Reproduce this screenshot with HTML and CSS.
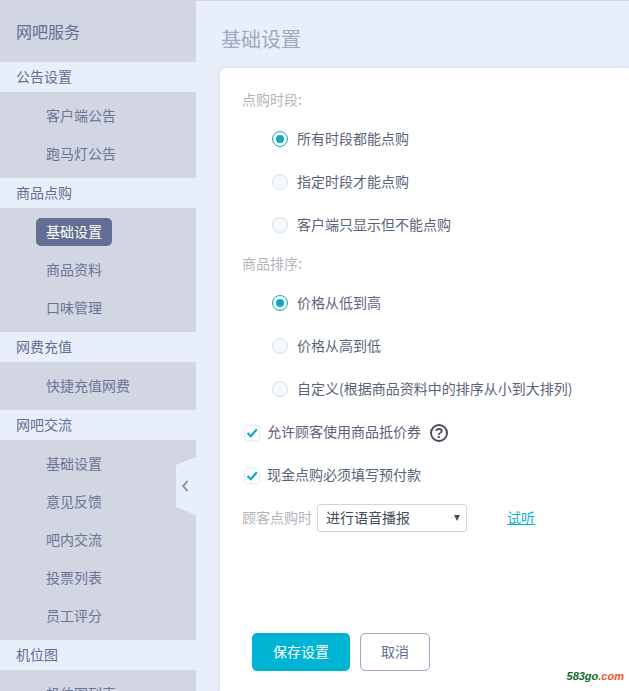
FILE: index.html
```html
<!DOCTYPE html>
<html lang="zh-CN">
<head>
<meta charset="utf-8">
<title>基础设置</title>
<link rel="stylesheet" href="styles.css">
</head>
<body>
<div class="app">
  <aside class="sidebar">
    <div class="brand">网吧服务</div>
    <div class="section">公告设置</div>
    <ul class="items">
      <li><a class="item">客户端公告</a></li>
      <li><a class="item">跑马灯公告</a></li>
    </ul>
    <div class="section">商品点购</div>
    <ul class="items">
      <li><a class="item active">基础设置</a></li>
      <li><a class="item">商品资料</a></li>
      <li><a class="item">口味管理</a></li>
    </ul>
    <div class="section">网费充值</div>
    <ul class="items">
      <li><a class="item">快捷充值网费</a></li>
    </ul>
    <div class="section">网吧交流</div>
    <ul class="items">
      <li><a class="item">基础设置</a></li>
      <li><a class="item">意见反馈</a></li>
      <li><a class="item">吧内交流</a></li>
      <li><a class="item">投票列表</a></li>
      <li><a class="item">员工评分</a></li>
    </ul>
    <div class="section">机位图</div>
    <ul class="items">
      <li><a class="item">机位图列表</a></li>
    </ul>
    <div class="collapse">
      <svg width="8" height="12" viewBox="0 0 8 12"><path d="M6.5 1 L2 6 L6.5 11" fill="none" stroke="#8b9cb3" stroke-width="2"/></svg>
    </div>
  </aside>
  <main class="main">
    <h1 class="title">基础设置</h1>
    <section class="card">
      <div class="label">点购时段:</div>
      <label class="row radio-row"><span class="radio on"></span>所有时段都能点购</label>
      <label class="row radio-row"><span class="radio"></span>指定时段才能点购</label>
      <label class="row radio-row"><span class="radio"></span>客户端只显示但不能点购</label>
      <div class="label">商品排序:</div>
      <label class="row radio-row"><span class="radio on"></span>价格从低到高</label>
      <label class="row radio-row"><span class="radio"></span>价格从高到低</label>
      <label class="row radio-row"><span class="radio"></span>自定义(根据商品资料中的排序从小到大排列)</label>
      <label class="row check-row">
        <span class="check"><svg width="14" height="14" viewBox="0 0 14 14"><path d="M2.5 7 L5.8 10.2 L11.8 3.2" fill="none" stroke="#0fa9c6" stroke-width="2.2"/></svg></span>
        允许顾客使用商品抵价券
        <span class="help">?</span>
      </label>
      <label class="row check-row">
        <span class="check"><svg width="14" height="14" viewBox="0 0 14 14"><path d="M2.5 7 L5.8 10.2 L11.8 3.2" fill="none" stroke="#0fa9c6" stroke-width="2.2"/></svg></span>
        现金点购必须填写预付款
      </label>
      <div class="row voice-row">
        <span class="voice-label">顾客点购时</span>
        <span class="select-box">进行语音播报</span>
        <a class="listen">试听</a>
      </div>
      <div class="actions">
        <button class="btn primary">保存设置</button>
        <button class="btn ghost">取消</button>
      </div>
    </section>
  </main>
</div>
<div class="watermark">583go<span class="wm-dot">.com</span></div>
</body>
</html>
```

FILE: styles.css
```css
* { box-sizing: border-box; }
html, body { margin: 0; padding: 0; height: 100%; overflow: hidden; }
body {
  font-family: "Noto Sans CJK SC", "Noto Sans", sans-serif;
  font-size: 14px;
  color: #5d6680;
  background: #e8eefa;
  border-top: 1px solid #d2d6e2;
}
ul { list-style: none; margin: 0; padding: 0; }
.app { display: flex; height: 690px; }
.sidebar { position: relative; width: 196px; flex: none; background: #d2d6e2; overflow: hidden; }
.brand { height: 61px; line-height: 61px; padding-left: 16px; font-size: 16px; color: #626f92; }
.section { height: 30px; line-height: 28px; padding-left: 16px; background: #e8eefa; color: #626f92; }
.items { padding: 5px 0; }
.items li { height: 38px; display: flex; align-items: center; padding-left: 36px; }
.item { display: block; height: 28px; line-height: 26px; padding: 0 10px; border-radius: 5px; color: #6a7594; }
.item.active { background: #636f92; color: #fff; }
.collapse {
  position: absolute; left: 176px; top: 456px; width: 20px; height: 58px;
  background: #e8eefa;
  clip-path: polygon(0 8px, 20px 0, 20px 58px, 0 50px);
  display: flex; align-items: center; padding-left: 5px;
}
.main { flex: 1; min-width: 0; padding-left: 24px; display: flex; flex-direction: column; }
.title { margin: 0 0 0 1px; height: 67px; line-height: 76px; font-size: 20px; font-weight: 400; color: #a1aabb; }
.card {
  flex: 1; background: #fff; border-radius: 6px 0 0 0;
  box-shadow: 0 0 4px #ccd6ea;
  padding: 14px 0 0 22px;
}
.label { height: 35px; line-height: 35px; color: #b0b4bb; }
.row { display: flex; align-items: center; height: 43px; padding-bottom: 2px; color: #5a6478; }
.radio-row { padding-left: 30px; }
.radio {
  width: 16px; height: 16px; border-radius: 50%; margin: 2px 9px 0 0;
  border: 1px solid #d3e0ea; background: #f6fafd; flex: none;
  display: flex; align-items: center; justify-content: center;
}
.radio.on { border-color: #0fa9c6; background: #fff; }
.radio.on::after { content: ""; width: 8px; height: 8px; border-radius: 50%; background: #0fa9c6; }
.check-row { padding-left: 3px; }
.check {
  width: 14px; height: 14px; margin: 4px 8px 0 0; border-radius: 3px; flex: none;
  background: #fff; box-shadow: 0 0 3px #bcd0e0;
  display: flex;
}
.help {
  width: 18px; height: 18px; margin: 4px 0 0 9px; border: 2px solid #4d4d5a; border-radius: 50%;
  display: flex; align-items: center; justify-content: center;
  font: 700 14px/1 "Liberation Sans", sans-serif; color: #4d4d5a;
}
.voice-label { width: 75px; color: #b0b4bb; flex: none; }
.select-box {
  position: relative; width: 150px; height: 28px; line-height: 24px; padding-left: 8px; margin-top: 3px;
  border: 1px solid #ccd6e0; border-radius: 3px; color: #444b5a; flex: none;
}
.select-box::after {
  content: ""; position: absolute; right: 6px; top: 10px;
  border-left: 3.5px solid transparent; border-right: 3.5px solid transparent; border-top: 6px solid #444b5a;
}
.listen { margin-left: 40px; color: #0fb1d2; text-decoration: underline; }
.actions { display: flex; gap: 10px; margin-top: 94px; padding-left: 10px; }
.btn {
  height: 38px; font: inherit; border-radius: 5px; cursor: pointer; padding: 0 0 2px;
}
.primary { width: 98px; background: #00b4d3; color: #fff; border: 0; }
.ghost { width: 70px; background: #fff; color: #626f92; border: 1px solid #9aa7c8; }
.watermark {
  position: absolute; right: 5px; bottom: 8px;
  font: italic 700 11px/14px "Liberation Sans", sans-serif; color: #0d6b2c;
}
.wm-dot { color: #f0502a; }
```
